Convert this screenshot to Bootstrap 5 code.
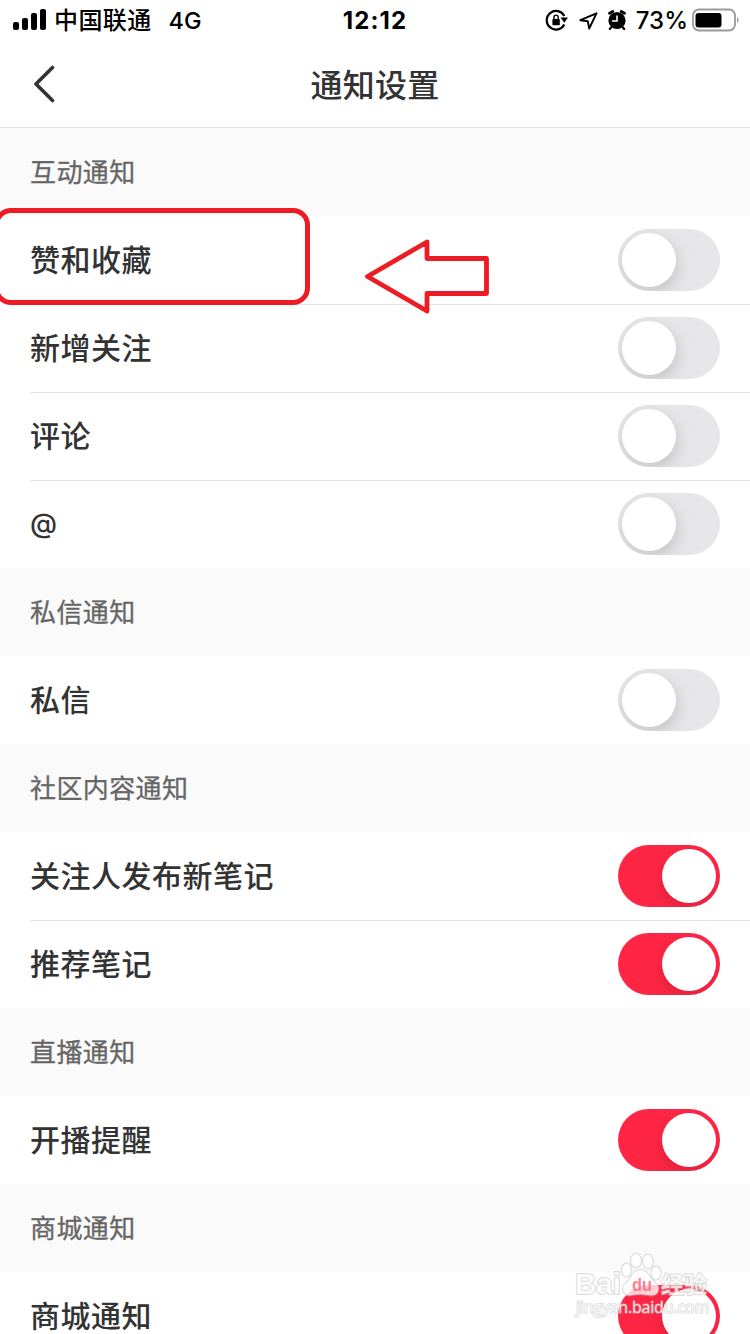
<!DOCTYPE html>
<html lang="zh-CN">
<head>
<meta charset="utf-8">
<meta name="viewport" content="width=device-width, initial-scale=1">
<title>通知设置</title>
<link href="https://cdn.jsdelivr.net/npm/bootstrap@5.3.0/dist/css/bootstrap.min.css" rel="stylesheet">
<style>
  body { font-family: Inter, "Noto Sans CJK SC", sans-serif; color: #333; background: #fff; }
  .screen { width: 750px; height: 1334px; }
  .status { height: 40px; color: #000; font-size: 24px; font-weight: 500; line-height: 40px; padding: 0 10px 0 13px; }
  .status span { padding-top: 2px; }
  .carrier { font-size: 24px; letter-spacing: .4px; margin-left: 8px; }
  .network { font-size: 23.5px; margin-left: 17px; }
  .clock { font-size: 24px; font-weight: 700; letter-spacing: 1.1px; }
  .percent { font-size: 24px; margin-left: 8px; }
  .battery { margin-left: 4px; }
  .titlebar { height: 88px; border-bottom: 1px solid #e5e5e5; }
  .titlebar h1 { font-size: 32px; font-weight: 500; letter-spacing: .3px; line-height: 92px; }
  .back { padding: 0 0 0 33px; }
  .section-head { height: 88px; background: #fafafa; color: #666; font-size: 26px; letter-spacing: .4px; padding: 0 30px; margin: 0; font-weight: 400; line-height: 90px; -webkit-text-stroke: .3px #666; }
  .setting { height: 88px; margin-left: 30px; padding-right: 30px; font-size: 30px; font-weight: 500; letter-spacing: .5px; }
  .setting + .setting { box-shadow: inset 0 1px #e5e5e5; }
  .at-sign { font-size: 27.5px; }
  .form-switch .form-check-input.toggle { width: 102px; height: 62px; margin: 0; float: none; border: 0; border-radius: 31px; background: #e7e7e9; position: relative; overflow: hidden; box-shadow: none; }
  .form-switch .form-check-input.toggle:checked { background: #ff2645; }
  .toggle::before { content: ""; position: absolute; left: 4px; top: 4px; width: 54px; height: 54px; border-radius: 50%; background: #fff; box-shadow: 2px 6px 16px rgba(0,0,0,.15); }
  .toggle:checked::before { left: 44px; box-shadow: -2px 6px 16px rgba(0,0,0,.13); }
  .mark-box { left: -6px; top: 208px; width: 316px; height: 97px; border: 5px solid #ed1c24; border-radius: 17px; }
  .mark-arrow { left: 360px; top: 235px; }
  .watermark { left: 570px; top: 1248px; }
</style>
</head>
<body>
<main class="screen position-relative overflow-hidden">
  <header>
    <div class="status d-flex align-items-center position-relative">
      <svg width="33" height="22" viewBox="0 0 33 22"><rect x="0" y="13" width="6" height="8" rx="2"/><rect x="9" y="9" width="6" height="12" rx="2"/><rect x="18" y="4" width="6" height="17" rx="2"/><rect x="27" y="0" width="6" height="21" rx="2"/></svg>
      <span class="carrier">中国联通</span><span class="network">4G</span>
      <span class="clock position-absolute start-50 translate-middle-x">12:12</span>
      <div class="d-flex align-items-center ms-auto">
        <svg width="84" height="26" viewBox="0 0 84 26">
          <path d="M20.300 9A9.300 9.300 0 1 0 20.300 17.500" fill="none" stroke="#000" stroke-width="2.200"/>
          <path d="M16.500 10.500h7.500L20.300 15.700z"/>
          <rect x="8.400" y="12" width="7.400" height="6.200" rx=".8"/><path d="M10 12.500v-2.300a2.100 2.100 0 0 1 4.200 0v2.300" fill="none" stroke="#000" stroke-width="1.400"/>
          <path d="M36.300 13.200 52.500 6.300 45.200 21.500 43.800 14.300z" fill="none" stroke="#000" stroke-width="1.900" stroke-linejoin="round"/>
          <circle cx="73" cy="13.500" r="8.600"/><path d="m65.500 6.300 3.300-1.800M80.500 6.300l-3.300-1.800" stroke="#000" stroke-width="2.800" stroke-linecap="round"/><path d="m67.500 20-1.700 2M78.500 20l1.700 2" stroke="#000" stroke-width="2.200" stroke-linecap="round"/>
          <path d="M73 8.500V14h-5" fill="none" stroke="#fff" stroke-width="1.600"/>
        </svg>
        <span class="percent">73%</span>
        <svg class="battery" width="48" height="24" viewBox="0 0 48 24"><rect x="1" y="1.500" width="42" height="21" rx="6" fill="none" stroke="#999" stroke-width="1.800"/><rect x="3.500" y="5" width="26" height="14.500" rx="3"/><path d="M45 8.500q3 3.500 0 7z" fill="#999"/></svg>
      </div>
    </div>
    <nav class="titlebar d-flex justify-content-center position-relative">
      <button class="back btn border-0 position-absolute start-0 top-50 translate-middle-y" aria-label="返回"><svg class="d-block" width="24" height="38" viewBox="0 0 24 38"><path d="M19.500 2.500 3 19l16.500 16.500" fill="none" stroke="#333" stroke-width="3.600" stroke-linecap="round" stroke-linejoin="round"/></svg></button>
      <h1 class="m-0">通知设置</h1>
    </nav>
  </header>

  <section>
    <h2 class="section-head">互动通知</h2>
    <label class="setting form-switch d-flex align-items-center justify-content-between ps-0">赞和收藏<input class="form-check-input toggle" type="checkbox" role="switch"></label>
    <label class="setting form-switch d-flex align-items-center justify-content-between ps-0">新增关注<input class="form-check-input toggle" type="checkbox" role="switch"></label>
    <label class="setting form-switch d-flex align-items-center justify-content-between ps-0">评论<input class="form-check-input toggle" type="checkbox" role="switch"></label>
    <label class="setting form-switch d-flex align-items-center justify-content-between ps-0"><span class="at-sign">@</span><input class="form-check-input toggle" type="checkbox" role="switch"></label>
  </section>
  <section>
    <h2 class="section-head">私信通知</h2>
    <label class="setting form-switch d-flex align-items-center justify-content-between ps-0">私信<input class="form-check-input toggle" type="checkbox" role="switch"></label>
  </section>
  <section>
    <h2 class="section-head">社区内容通知</h2>
    <label class="setting form-switch d-flex align-items-center justify-content-between ps-0">关注人发布新笔记<input class="form-check-input toggle" type="checkbox" role="switch" checked></label>
    <label class="setting form-switch d-flex align-items-center justify-content-between ps-0">推荐笔记<input class="form-check-input toggle" type="checkbox" role="switch" checked></label>
  </section>
  <section>
    <h2 class="section-head">直播通知</h2>
    <label class="setting form-switch d-flex align-items-center justify-content-between ps-0">开播提醒<input class="form-check-input toggle" type="checkbox" role="switch" checked></label>
  </section>
  <section>
    <h2 class="section-head">商城通知</h2>
    <label class="setting form-switch d-flex align-items-center justify-content-between ps-0">商城通知<input class="form-check-input toggle" type="checkbox" role="switch" checked></label>
  </section>

  <div class="mark-box position-absolute"></div>
  <svg class="mark-arrow position-absolute" width="134" height="84" viewBox="0 0 134 84"><path d="M67 7 7.500 41.500 67 76V58.500h59.500v-35H67z" fill="none" stroke="#ed1c24" stroke-width="4.800" stroke-linejoin="round"/></svg>

  <svg class="watermark position-absolute" width="180" height="86" viewBox="0 0 180 86">
    <g fill="#fff" fill-opacity=".78" stroke="#bbb" stroke-opacity=".5" stroke-width="2" stroke-linejoin="round" paint-order="stroke" font-family="'Liberation Sans','Noto Sans CJK SC',sans-serif">
      <text x="5" y="46" font-size="29" font-weight="700" textLength="46" lengthAdjust="spacingAndGlyphs">Bai</text>
      <ellipse cx="56.500" cy="22" rx="4.800" ry="6.500"/><ellipse cx="66" cy="12.500" rx="5" ry="7"/><ellipse cx="78" cy="13.500" rx="5" ry="7"/><ellipse cx="86" cy="25" rx="4.800" ry="6.500"/>
      <path d="M71 22c-7 0-9 6-12 10-4 4-8 6-5 12 1 3 4 4 8 3 6-1 11-1 16 0 5 1 9 0 10-4 2-5-2-8-6-11-3-4-5-10-11-10z"/>
      <text x="62" y="43" font-size="19" font-weight="700" fill="#ff5d74" stroke="none" textLength="20" lengthAdjust="spacingAndGlyphs">du</text>
      <text x="91" y="45" font-size="23" font-weight="700" textLength="46">经验</text>
      <text x="6" y="65" font-size="16" font-weight="400" stroke-width="1.600" font-family="'Open Sans',sans-serif" textLength="133">jingyan.baidu.com</text>
    </g>
  </svg>
</main>
<script src="https://cdn.jsdelivr.net/npm/bootstrap@5.3.0/dist/js/bootstrap.bundle.min.js"></script>
</body>
</html>
